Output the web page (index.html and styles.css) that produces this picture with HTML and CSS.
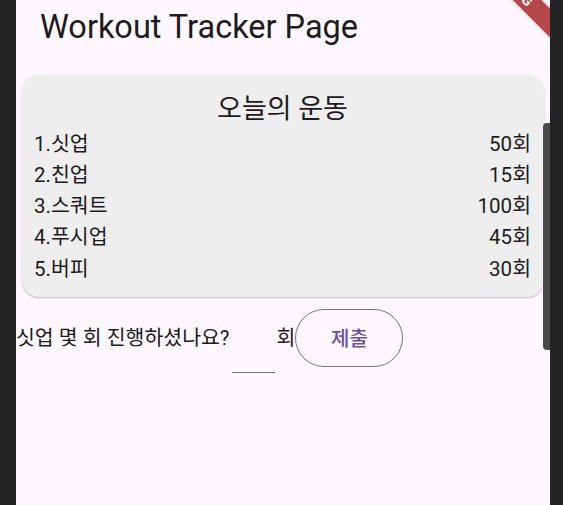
FILE: index.html
```html
<!DOCTYPE html>
<html lang="ko">
<head>
<meta charset="utf-8">
<title>Workout Tracker Page</title>
<link rel="stylesheet" href="styles.css">
</head>
<body>
<div class="frame">
  <div class="app">
    <header class="appbar"><h1 class="title">Workout Tracker Page</h1></header>
    <main class="content">
      <section class="card">
        <h2 class="card-title">오늘의 운동</h2>
        <ul class="list">
          <li class="row"><span>1.싯업</span><span>50회</span></li>
          <li class="row"><span>2.친업</span><span>15회</span></li>
          <li class="row"><span>3.스쿼트</span><span>100회</span></li>
          <li class="row"><span>4.푸시업</span><span>45회</span></li>
          <li class="row"><span>5.버피</span><span>30회</span></li>
        </ul>
      </section>
      <div class="entry">
        <span class="question">싯업 몇 회 진행하셨나요?</span>
        <div class="field"></div>
        <span class="unit">회</span>
        <button class="submit" type="button">제출</button>
      </div>
    </main>
    <div class="scrollbar"></div>
    <div class="banner"><span class="banner-text">DEBUG</span></div>
  </div>
</div>
</body>
</html>
```
FILE: styles.css
```css
* { box-sizing: border-box; }
html, body { margin: 0; height: 100%; }
body {
  background: #232323;
  font-family: Roboto, "Noto Sans CJK KR", sans-serif;
  color: #1d1b20;
}
.frame {
  display: flex;
  height: 505px;
  padding: 0 13px 0 16px;
}
.app {
  position: relative;
  flex: 1;
  background: #fef7ff;
  overflow: hidden;
}
.appbar {
  padding: 8px 0 0 24px;
  height: 75px;
}
.title {
  margin: 0;
  font-size: 32.5px;
  font-weight: 400;
  line-height: 38px;
  white-space: nowrap;
}
.card {
  margin: 0 6px;
  background: #eeeeee;
  border-radius: 17px;
  box-shadow: 0 1px 2px rgba(0, 0, 0, 0.25);
  padding: 19px 13px 12px 12px;
}
.card-title {
  margin: 0;
  text-align: center;
  font-size: 27px;
  font-weight: 400;
  line-height: 31px;
}
.list {
  list-style: none;
  margin: 3.5px 0 0;
  padding: 0;
}
.row {
  display: flex;
  justify-content: space-between;
  font-size: 20.5px;
  line-height: 31.25px;
}
.entry {
  margin-top: 6px;
  display: flex;
  align-items: center;
  height: 70px;
}
.question {
  font-size: 20.5px;
  line-height: 24px;
  white-space: nowrap;
}
.field {
  width: 43px;
  height: 70px;
  border-bottom: 1px solid #79747e;
  margin-left: 2px;
}
.unit {
  font-size: 20.5px;
  line-height: 24px;
  margin-left: 2px;
}
.submit {
  width: 108px;
  height: 58px;
  border: 1px solid #79747e;
  border-radius: 29px;
  background: transparent;
  color: #6750a4;
  font-family: Roboto, "Noto Sans CJK KR", sans-serif;
  font-size: 20px;
  font-weight: 500;
  padding: 0;
  margin-left: 0;
}
.scrollbar {
  position: absolute;
  top: 123px;
  right: 0;
  width: 7px;
  height: 227px;
  background: #4a4a4a;
  border-radius: 4px 0 0 4px;
}
.banner {
  position: absolute;
  left: 461px;
  top: 20px;
  width: 160px;
  height: 20px;
  background: #b5474a;
  transform: rotate(45deg);
  box-shadow: 0 0 4px rgba(0, 0, 0, 0.3);
  display: flex;
  align-items: center;
  padding-left: 0;
}
.banner-text {
  color: #ffffff;
  font-size: 14px;
  font-weight: 700;
  letter-spacing: 1px;
  line-height: 20px;
  margin-left: -6px;
}
```
